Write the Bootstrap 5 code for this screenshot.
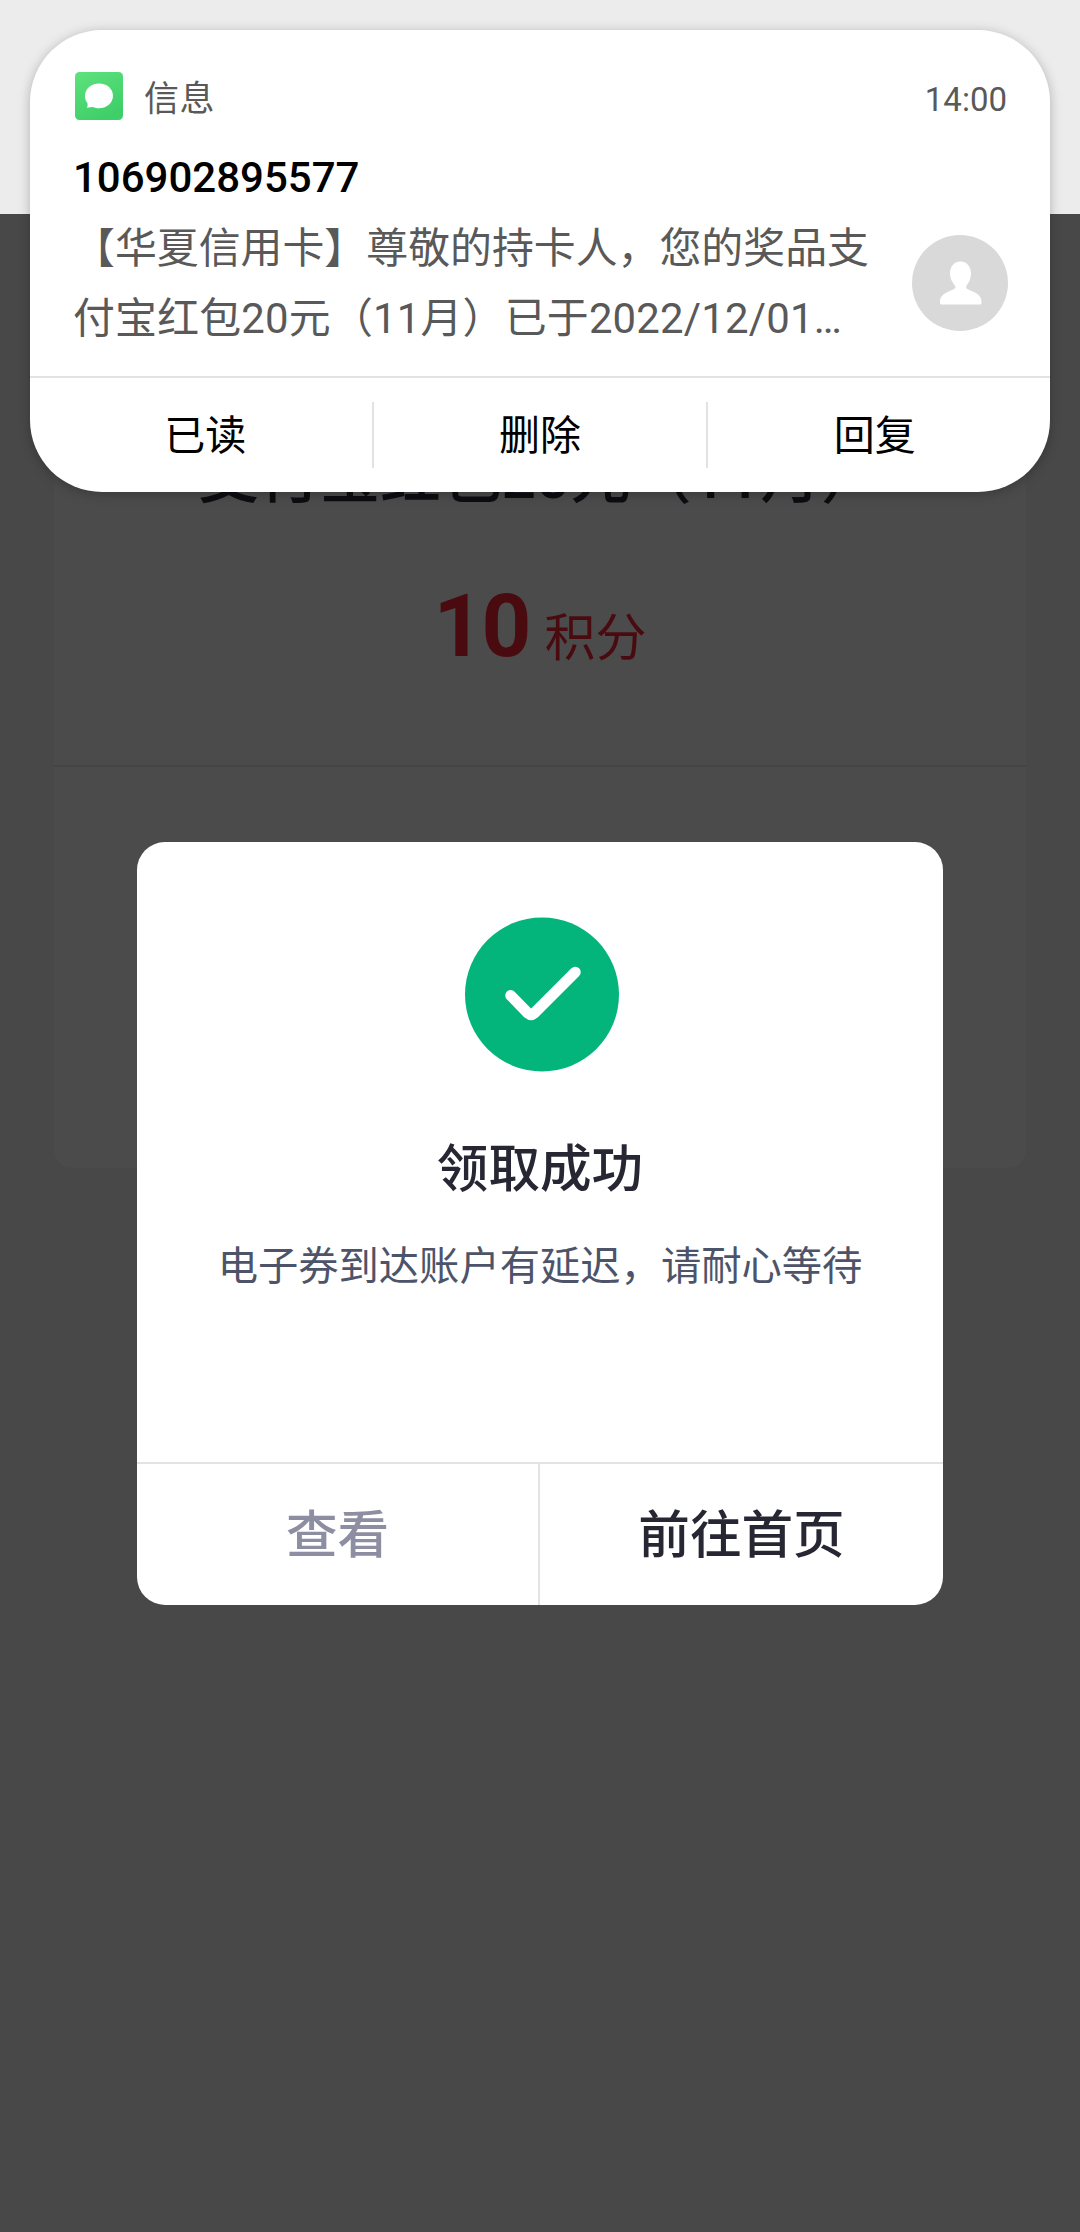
<!DOCTYPE html>
<html lang="zh-CN">
<head>
<meta charset="utf-8">
<meta name="viewport" content="width=device-width, initial-scale=1">
<title>领取成功</title>
<link href="https://cdn.jsdelivr.net/npm/bootstrap@5.3.0/dist/css/bootstrap.min.css" rel="stylesheet">
<style>
  body { font-family: Roboto, "Noto Sans CJK SC", sans-serif; background: #484848; width: 1080px; height: 2232px; overflow: hidden; }
  .top-strip { height: 214px; background: #ececec; }
  .prize { margin: 0 54px; height: 954px; background: #4b4b4b; border-radius: 0 0 18px 18px; }
  .prize-head { height: 553px; border-bottom: 2px solid #444; padding-top: 231px; }
  .prize-name { font-size: 60.6px; line-height: 66px; font-weight: 500; color: #0d0c11; }
  .prize-cost { margin-top: 65px; line-height: 100px; color: #4a0b10; }
  .prize-cost b { font-size: 87px; font-weight: 700; letter-spacing: -2px; }
  .prize-cost span { font-size: 51px; margin-left: 15px; }

  .notice { left: 30px; top: 30px; width: 1020px; height: 462px; border-radius: 72px; box-shadow: 0 2px 12px rgba(0,0,0,.25); z-index: 20; overflow: hidden; }
  .notice-main { height: 348px; padding: 42px 42px 0 43px; border-bottom: 2px solid #e2e2e2; box-sizing: border-box; }
  .notice-top { height: 48px; padding-left: 2px; color: #595959; }
  .app-name { font-size: 35px; margin-left: 21px; line-height: 48px; padding-top: 8px; letter-spacing: .6px; }
  .clock { font-size: 33px; line-height: 48px; padding-top: 8px; margin-right: 1px; }
  .sender { font-size: 42px; line-height: 50px; font-weight: 500; color: #000; margin-top: 33px; }
  .message { font-size: 41.9px; line-height: 70px; color: #595959; width: 806px; white-space: nowrap; margin-top: 11px; }
  .message-tail { letter-spacing: .2px; }
  .avatar { margin-top: 32px; width: 96px; height: 96px; }
  .notice-actions { height: 114px; padding: 0 8px; font-size: 41px; color: #000; }
  .notice-actions .rule { width: 2px; height: 66px; background: #e2e2e2; margin: 0 -1px; }
  .notice-actions .col { padding-top: 3px; }

  .result { left: 137px; top: 842px; width: 806px; height: 763px; border-radius: 28px; z-index: 10; }
  .result-body { height: 622px; padding-top: 75px; border-bottom: 2px solid #e3e3e5; }
  .tick { width: 154px; height: 155px; margin-left: 4px; }
  .result-title { font-size: 51.6px; line-height: 60px; font-weight: 500; color: #272733; margin-top: 68px; }
  .result-text { font-size: 40.3px; line-height: 50px; color: #4d5469; margin-top: 42px; }
  .result-actions { font-size: 51.6px; font-weight: 500; }
  .result-actions > div { padding-top: 2px; }
  .result-actions .first { color: #8e8ea2; width: 401px; }
  .result-actions .second { color: #272733; border-left: 2px solid #e3e3e5; }
</style>
<script src="https://cdn.jsdelivr.net/npm/bootstrap@5.3.0/dist/js/bootstrap.bundle.min.js"></script>
</head>
<body class="position-relative">
  <div class="top-strip"></div>
  <main class="prize">
    <div class="prize-head text-center">
      <div class="prize-name">支付宝红包20元（11月）</div>
      <div class="prize-cost"><b>10</b><span>积分</span></div>
    </div>
  </main>

  <section class="notice position-absolute bg-white">
    <div class="notice-main">
      <div class="notice-top d-flex align-items-center">
        <svg width="48" height="48" viewBox="0 0 48 48">
          <defs><linearGradient id="g" x1="0" y1="0" x2=".5" y2="1"><stop offset="0" stop-color="#5fe27c"/><stop offset="1" stop-color="#3fcf69"/></linearGradient></defs>
          <rect width="48" height="48" rx="4.5" fill="url(#g)"/>
          <path d="M24 11.500c8.300 0 14 5.500 14 12.300S32.300 36.200 24 36.200c-2.300 0-4.300-.5-6-1.300-2 .3-4 .3-6.200.8.900-1.500 1.100-3 .5-4.800C10.800 29 10 26.700 10 24c0-6.900 5.700-12.500 14-12.500z" fill="#fff"/>
        </svg>
        <span class="app-name">信息</span>
        <span class="clock ms-auto">14:00</span>
      </div>
      <div class="sender">106902895577</div>
      <div class="d-flex justify-content-between">
        <div class="message">【华夏信用卡】尊敬的持卡人，您的奖品支<div class="message-tail">付宝红包20元（11月）已于2022/12/01…</div></div>
        <svg class="avatar" viewBox="0 0 96 96">
          <circle cx="48" cy="48" r="48" fill="#d9d9d9"/>
          <path d="M48.500 26.500c6 0 10.500 4.500 10.500 12 0 5-2 9-4 11.500-1.500 2-1.200 3.500.8 4.300l6.200 2.700c5.200 2.300 7.500 5.500 7.500 10V68q0 1.500-1.500 1.500H29.500Q28 69.500 28 68v-1c0-4.500 2.300-7.700 7.500-10l6.200-2.700c2-.8 2.300-2.300.8-4.300-2-2.500-4.500-6.500-4.500-11.500 0-7.500 4.500-12 10.500-12z" fill="#fff"/>
        </svg>
      </div>
    </div>
    <div class="notice-actions d-flex align-items-center text-center">
      <div class="col">已读</div><div class="rule"></div>
      <div class="col">删除</div><div class="rule"></div>
      <div class="col">回复</div>
    </div>
  </section>

  <section class="result position-absolute bg-white d-flex flex-column overflow-hidden">
    <div class="result-body text-center d-flex flex-column align-items-center">
      <svg class="tick" viewBox="0 0 155 155">
        <circle cx="77.500" cy="77.500" r="77.500" fill="#03b57a"/>
        <path d="M46 78.500 63.500 96.500Q66.500 99 69.500 96.500L111 55" fill="none" stroke="#fff" stroke-width="11" stroke-linecap="round" stroke-linejoin="round"/>
      </svg>
      <div class="result-title">领取成功</div>
      <div class="result-text">电子券到达账户有延迟，请耐心等待</div>
    </div>
    <div class="result-actions d-flex flex-grow-1">
      <div class="first d-flex align-items-center justify-content-center">查看</div>
      <div class="second d-flex flex-grow-1 align-items-center justify-content-center">前往首页</div>
    </div>
  </section>
</body>
</html>
